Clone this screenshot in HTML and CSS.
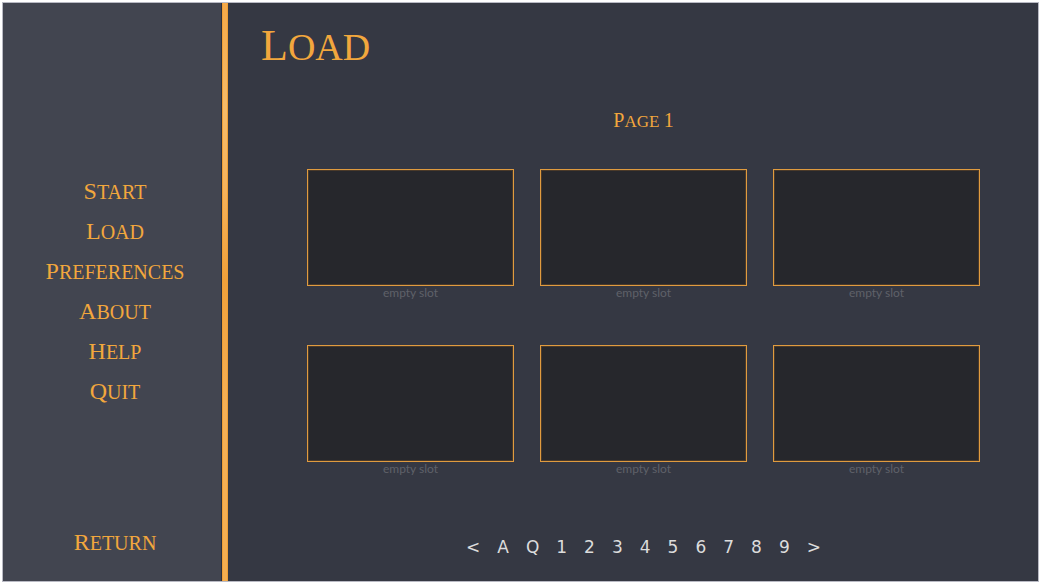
FILE: index.html
```html
<!DOCTYPE html>
<html lang="en">
<head>
<meta charset="utf-8">
<meta name="viewport" content="width=device-width, initial-scale=1">
<title>Load</title>
<link rel="stylesheet" href="styles.css">
</head>
<body>
<div class="game">
  <aside class="sidebar">
    <nav class="menu">
      <button class="menu-item caps" type="button">Start</button>
      <button class="menu-item caps" type="button">Load</button>
      <button class="menu-item caps" type="button">Preferences</button>
      <button class="menu-item caps" type="button">About</button>
      <button class="menu-item caps" type="button">Help</button>
      <button class="menu-item caps" type="button">Quit</button>
    </nav>
    <button class="menu-item return caps" type="button">Return</button>
  </aside>
  <div class="divider"></div>
  <main class="content">
    <h1 class="title caps">Load</h1>
    <h2 class="page-name caps">Page <span class="page-number">1</span></h2>
    <div class="slots">
      <button class="slot" type="button"><span class="thumb"></span><span class="slot-label">empty slot</span></button>
      <button class="slot" type="button"><span class="thumb"></span><span class="slot-label">empty slot</span></button>
      <button class="slot" type="button"><span class="thumb"></span><span class="slot-label">empty slot</span></button>
      <button class="slot" type="button"><span class="thumb"></span><span class="slot-label">empty slot</span></button>
      <button class="slot" type="button"><span class="thumb"></span><span class="slot-label">empty slot</span></button>
      <button class="slot" type="button"><span class="thumb"></span><span class="slot-label">empty slot</span></button>
    </div>
    <nav class="pager" aria-label="Pages">
      <button type="button">&lt;</button>
      <button type="button">A</button>
      <button type="button">Q</button>
      <button type="button">1</button>
      <button type="button">2</button>
      <button type="button">3</button>
      <button type="button">4</button>
      <button type="button">5</button>
      <button type="button">6</button>
      <button type="button">7</button>
      <button type="button">8</button>
      <button type="button">9</button>
      <button type="button">&gt;</button>
    </nav>
  </main>
</div>
</body>
</html>
```

FILE: styles.css
```css
* {
  box-sizing: border-box;
}

body {
  margin: 0;
  padding: 2px;
  background: #fff;
  color: #f2a73d;
  font-family: "Liberation Serif", serif;
}

button {
  margin: 0;
  padding: 0;
  border: 0;
  background: none;
  color: inherit;
  font: inherit;
  cursor: pointer;
}

.game {
  display: flex;
  min-height: calc(100vh - 4px);
  border: 1px solid #b9bac4;
  background: #353843;
}

.caps {
  display: block;
  text-transform: uppercase;
  font-weight: 400;
}

.sidebar {
  display: grid;
  grid-template-rows: 1fr auto 1fr;
  flex: 0 0 219px;
  padding-left: 6px;
  border-right: 1px solid #2c303e;
  background: #424550;
}

.menu {
  grid-row: 2;
  display: flex;
  flex-direction: column;
  align-items: center;
  gap: 11px;
  padding-bottom: 2px;
}

.menu-item {
  font-size: 20px;
  line-height: 28px;
}

.menu-item::first-letter {
  font-size: 24px;
}

.return {
  grid-row: 3;
  align-self: end;
  justify-self: center;
  margin-bottom: 24px;
}

.divider {
  flex: 0 0 6px;
  background: linear-gradient(90deg, #ee9f38 0 1px, transparent 1px 5px, #ee9f38 5px),
    linear-gradient(#f5a948, #f6bb69 18%, #f6b35c 32%, #f0a03a 48%, #f5b056 70%, #f5ae50);
}

.content {
  display: flex;
  flex-direction: column;
  flex: 1;
  min-width: 0;
  padding: 19px 58px 22px 79px;
}

.title {
  align-self: flex-start;
  margin: 0 0 0 -46px;
  font-size: 38px;
  line-height: 48px;
}

.title::first-letter {
  font-size: 44px;
}

.page-name {
  align-self: center;
  margin: 37px 0 35px;
  font-size: 17px;
  line-height: 24px;
}

.page-name::first-letter,
.page-number {
  font-size: 20px;
}

.slots {
  display: grid;
  grid-template-columns: repeat(3, 1fr);
  gap: 45px 26px;
}

.slot {
  display: flex;
  flex-direction: column;
}

.thumb {
  width: 100%;
  height: 117px;
  border: 1px solid #e09b3f;
  background: #26272c;
  box-shadow: inset 0 0 0 1px #4a3a2a;
}

.slot-label {
  align-self: center;
  color: #5f6169;
  font-family: Lato, sans-serif;
  font-size: 12px;
  line-height: 14px;
}

.pager {
  display: flex;
  justify-content: center;
  gap: 17px;
  margin-top: auto;
  color: #dcdcdc;
  font-family: "DejaVu Sans", sans-serif;
  font-size: 17px;
  line-height: 24px;
}
```
